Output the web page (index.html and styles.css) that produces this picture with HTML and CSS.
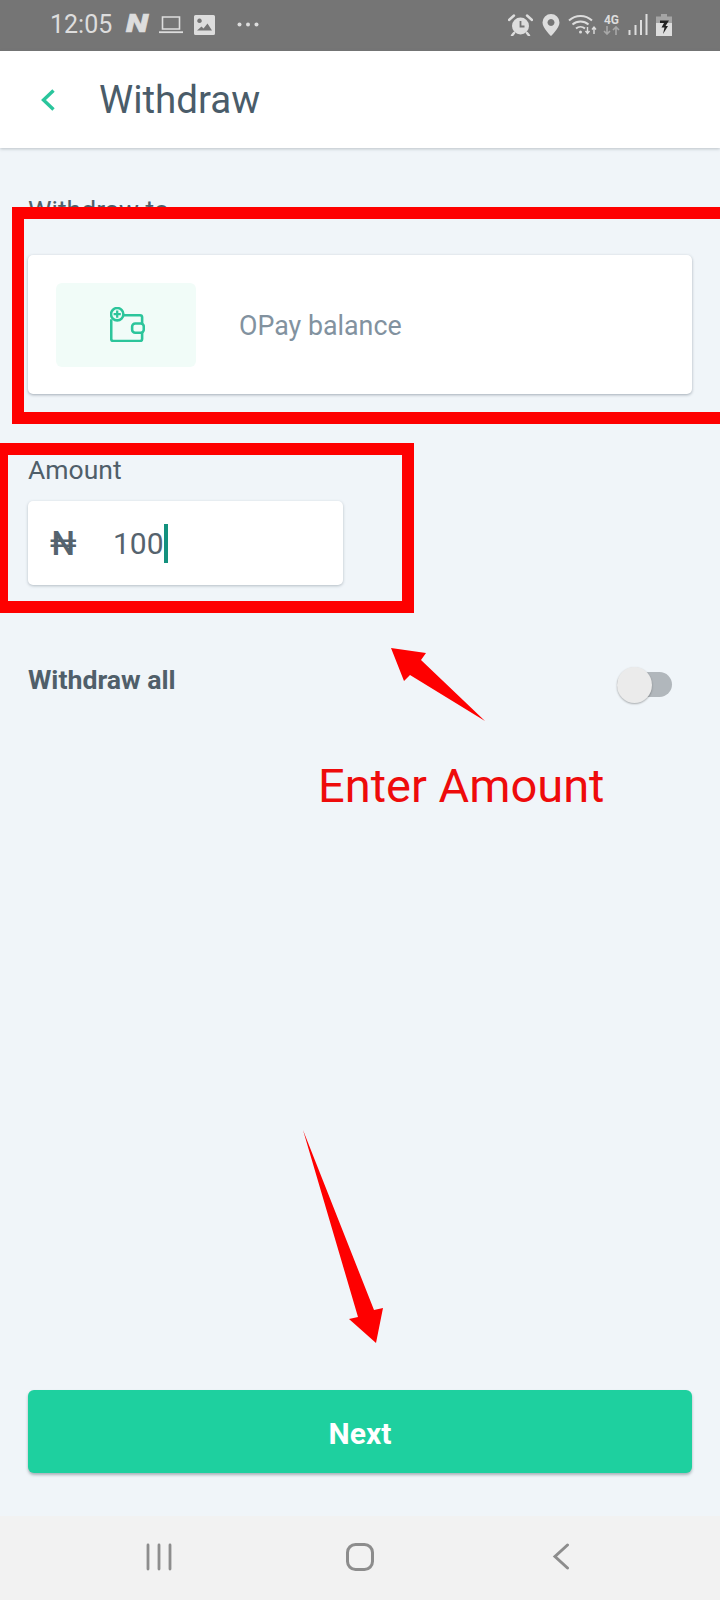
FILE: index.html
```html
<!DOCTYPE html>
<html lang="en">
<head>
<meta charset="utf-8">
<title>Withdraw</title>
<link rel="stylesheet" href="styles.css">
</head>
<body>
<div class="page">
  <div class="status">
    <div class="status-left">
      <span class="time">12:05</span>
      <span class="n-slot"><span class="n-logo">N</span></span>
      <svg class="ic-laptop" viewBox="0 0 24 18"><path d="M3.500 1h17v12h-17z" fill="none" stroke="#ddd" stroke-width="1.600"/><path d="M0 16.200h24" stroke="#ddd" stroke-width="1.800"/></svg>
      <svg class="ic-image" viewBox="0 0 21 20"><path fill-rule="evenodd" fill="#ddd" d="M1.500 0h18A1.500 1.500 0 0 1 21 1.500v17a1.500 1.500 0 0 1-1.500 1.500h-18A1.500 1.500 0 0 1 0 18.500v-17A1.500 1.500 0 0 1 1.500 0zM5.500 3.500a2.300 2.300 0 1 0 .01 0zM3 15.500h15l-4.500-7-4 5-2-2z"/></svg>
      <svg class="ic-dots" viewBox="0 0 22 5"><circle cx="2.500" cy="2.500" r="2" fill="#ddd"/><circle cx="11" cy="2.500" r="2" fill="#ddd"/><circle cx="19.500" cy="2.500" r="2" fill="#ddd"/></svg>
    </div>
    <div class="status-right">
      <svg class="ic-alarm" viewBox="0 0 25 22"><circle cx="12.500" cy="12" r="8.500" fill="#ddd"/><path d="M12.500 7v5.500h4" fill="none" stroke="#757575" stroke-width="1.800"/><path d="M1 6l5-4.500M24 6l-5-4.500M6 19l-2 2.500M19 19l2 2.500" stroke="#ddd" stroke-width="2.400" stroke-linecap="round"/></svg>
      <svg class="ic-pin" viewBox="0 0 18 22"><path fill-rule="evenodd" fill="#ddd" d="M9 0a8.500 8.500 0 0 1 8.500 8.500C17.500 14 9 22 9 22S.5 14 .5 8.500A8.500 8.500 0 0 1 9 0zm0 5a3.500 3.500 0 1 0 .01 0z"/></svg>
      <svg class="ic-wifi" viewBox="0 0 29 21"><path d="M1 6.500a17 17 0 0 1 23 0M4.500 10.500a12 12 0 0 1 16 0M8 14.500a7 7 0 0 1 9 0" fill="none" stroke="#ddd" stroke-width="1.900"/><circle cx="12.500" cy="18" r="1.500" fill="#ddd"/><path d="M19.500 13v6M17.500 17l2 2.500 2-2.500M26 20v-7M24 15.500l2-2.500 2 2.500" fill="none" stroke="#ddd" stroke-width="1.400"/></svg>
      <div class="net">
        <span class="net-label">4G</span>
        <svg class="ic-net" viewBox="0 0 17 9"><path d="M4 0v8M1 5l3 3 3-3M13 9V1M10 4l3-3 3 3" fill="none" stroke="#a8a8a8" stroke-width="1.600"/></svg>
      </div>
      <svg class="ic-signal" viewBox="0 0 20 21"><path d="M1.500 16v5M7.500 11v10M13 6v15M18.500 0v21" stroke="#ddd" stroke-width="2"/></svg>
      <svg class="ic-battery" viewBox="0 0 16 22"><path fill="#a5a5a5" d="M5 0h6v2.500H5zM0 2.500h16V9H0z"/><path fill="#ddd" d="M0 9h16v13H0z"/><path fill="#222" d="M4 6.500h9L9.500 12H12l-5 8 1.500-6.500H5.500L8 9H4z"/></svg>
    </div>
  </div>

  <header class="header">
    <svg class="back" viewBox="0 0 14 22"><path d="M12.500 1.500L2.500 11l10 9.500" fill="none" stroke="#2ac59c" stroke-width="3.400"/></svg>
    <h1 class="title">Withdraw</h1>
  </header>

  <main class="main">
    <div class="label label-to">Withdraw to</div>
    <div class="card">
      <div class="tile">
        <svg class="ic-wallet" viewBox="0 0 34 34"><path d="M1.200 12v19a2 2 0 0 0 2 2h26a2 2 0 0 0 2-2V10a2 2 0 0 0-2-2H13" fill="none" stroke="#2cc59b" stroke-width="2.500"/><circle cx="7" cy="7" r="6" fill="#f1fcf8" stroke="#2cc59b" stroke-width="2.500"/><path d="M7 3.500v7M3.500 7h7" stroke="#2cc59b" stroke-width="2.200"/><rect x="21.500" y="16" width="11.300" height="9" rx="3" fill="#f1fcf8" stroke="#2cc59b" stroke-width="2.500"/></svg>
      </div>
      <span class="balance">OPay balance</span>
    </div>

    <div class="label label-amount">Amount</div>
    <div class="input">
      <span class="naira">₦</span>
      <span class="value">100</span><span class="caret"></span>
    </div>

    <div class="all-row">
      <span class="all-label">Withdraw all</span>
      <span class="toggle"><span class="thumb"></span></span>
    </div>

    <button class="next" type="button">Next</button>
  </main>

  <nav class="nav">
    <svg class="ic-recents" viewBox="0 0 26 28"><path d="M2 2v24M13 2v24M24 2v24" stroke="#8d8d8d" stroke-width="2.800" stroke-linecap="round"/></svg>
    <svg class="ic-home" viewBox="0 0 28 28"><rect x="1.500" y="1.500" width="25" height="25" rx="8" fill="none" stroke="#8d8d8d" stroke-width="3"/></svg>
    <svg class="ic-nav-back" viewBox="0 0 18 27"><path d="M15.500 2L3 13.500 15.500 25" fill="none" stroke="#8d8d8d" stroke-width="3" stroke-linecap="round"/></svg>
  </nav>

  <div class="mark mark-to"></div>
  <div class="mark mark-amount"></div>
  <svg class="arrows" viewBox="0 0 720 1600">
    <polygon fill="#fe0000" points="391,648 426,653 421,660 485,721 410,675 404,681"/>
    <polygon fill="#fe0000" points="303,1130 374,1310 383,1308 376,1343 349,1319 358,1317"/>
  </svg>
  <div class="enter">Enter Amount</div>
</div>
</body>
</html>
```
FILE: styles.css
```css
* { box-sizing: border-box; }
html, body { margin: 0; padding: 0; }
body { font-family: Roboto, "Liberation Sans", sans-serif; background: #f0f5f9; }
.page { position: relative; width: 720px; height: 1600px; overflow: hidden; display: flex; flex-direction: column; background: #f0f5f9; }

.status { flex: none; height: 51px; background: #757575; display: flex; align-items: center; justify-content: space-between; padding: 0 48px 2px 50px; color: #ddd; }
.status-left, .status-right { display: flex; align-items: center; }
.time { font-size: 25px; width: 76px; line-height: 30px; }
.n-slot { width: 33px; line-height: 30px; }
.n-logo { display: inline-block; font-size: 26px; font-weight: 900; font-style: italic; color: #ddd; transform: scaleX(1.25); transform-origin: left center; -webkit-text-stroke: .6px #ddd; }
.ic-laptop { width: 24px; height: 18px; margin-right: 11px; }
.ic-image { width: 21px; height: 20px; margin-right: 22px; }
.ic-dots { width: 22px; height: 5px; }
.ic-alarm { width: 25px; height: 22px; margin-right: 9px; }
.ic-pin { width: 18px; height: 22px; margin-right: 8px; }
.ic-wifi { width: 29px; height: 21px; margin-right: 6px; }
.net { width: 17px; margin-right: 8px; display: flex; flex-direction: column; align-items: center; }
.net-label { font-size: 12px; font-weight: 700; line-height: 12px; }
.ic-net { width: 17px; height: 9px; display: block; }
.ic-signal { width: 20px; height: 21px; margin-right: 8px; }
.ic-battery { width: 16px; height: 22px; }

.header { flex: none; height: 97px; background: #fff; display: flex; align-items: center; padding-left: 41px; box-shadow: 0 1px 3px rgba(90,100,110,.35); position: relative; }
.back { width: 14px; height: 22px; margin-right: 44px; }
.title { margin: 0; font-size: 38.500px; font-weight: 400; color: #4a5c69; }

.main { flex: 1; display: flex; flex-direction: column; padding: 0 28px 43px; }
.label { font-size: 26.500px; line-height: 30px; color: #505f6a; }
.label-to { margin-top: 47px; }
.card { margin-top: 30px; height: 139px; padding: 28px; display: flex; align-items: center; background: #fff; border-radius: 5px; box-shadow: 0 1px 3px rgba(70,85,100,.45); }
.tile { width: 140px; height: 84px; background: #f1fcf8; border-radius: 6px; display: flex; align-items: center; justify-content: center; }
.ic-wallet { width: 35px; height: 35px; margin-left: 2px; }
.balance { margin-left: 43px; padding-top: 3px; font-size: 26.800px; color: #82929f; }
.label-amount { margin-top: 61px; }
.input { margin-top: 16px; width: 315px; height: 84px; padding-left: 22px; display: flex; align-items: center; background: #fff; border-radius: 5px; box-shadow: 0 1px 3px rgba(70,85,100,.35); }
.naira { width: 63px; font-size: 33px; color: #55636e; font-weight: 500; }
.value { font-size: 30px; color: #55636e; }
.caret { width: 4px; height: 39px; background: #13917e; }

.all-row { margin-top: 79px; padding-top: 1px; display: flex; justify-content: space-between; align-items: flex-start; padding-right: 20px; }
.all-label { font-size: 26.700px; line-height: 30px; font-weight: 700; color: #505f6a; }
.toggle { position: relative; width: 55px; height: 25px; margin-top: 7px; background: #b1b7bc; border-radius: 13px; }
.thumb { position: absolute; left: 0; top: -5px; width: 35px; height: 36px; border-radius: 50%; background: #ebebeb; box-shadow: 0 1px 2px rgba(0,0,0,.3); }

.next { margin-top: auto; height: 83px; padding-top: 4px; border: 0; border-radius: 6px; background: #1ed09f; color: #fff; font-family: inherit; font-size: 30px; font-weight: 700; box-shadow: 0 2px 3px rgba(60,80,90,.4); }

.nav { flex: none; height: 84px; background: #f2f2f2; display: flex; align-items: flex-start; padding-top: 27px; position: relative; }
.ic-recents { width: 26px; height: 28px; margin-left: 146px; }
.ic-home { width: 28px; height: 28px; margin-left: 174px; }
.ic-nav-back { width: 18px; height: 27px; margin-left: 178px; }

.mark { position: absolute; border: 12px solid #fe0000; }
.mark-to { left: 12px; top: 207px; width: 740px; height: 217px; }
.mark-amount { left: -4px; top: 443px; width: 418px; height: 170px; }
.arrows { position: absolute; left: 0; top: 0; width: 720px; height: 1600px; pointer-events: none; }
.enter { position: absolute; left: 318px; top: 756px; font-size: 47px; line-height: 60px; color: #ee0b0b; white-space: nowrap; }
```
